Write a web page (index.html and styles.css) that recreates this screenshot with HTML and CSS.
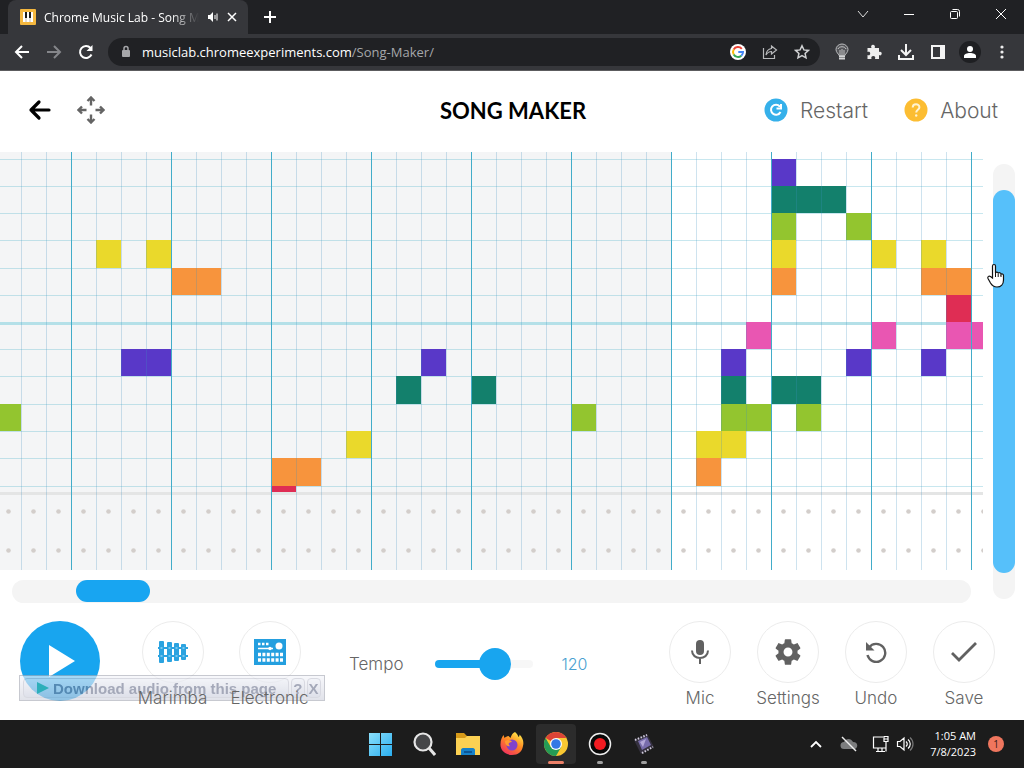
FILE: index.html
```html
<!DOCTYPE html>
<html lang="en">
<head>
<meta charset="utf-8">
<meta name="viewport" content="width=device-width, initial-scale=1">
<title>Chrome Music Lab - Song Maker</title>
<link rel="stylesheet" href="styles.css">
</head>
<body>
<header class="browser">
  <div class="tabstrip">
    <div class="tab">
      <svg class="favicon" width="16" height="16" viewBox="0 0 16 16"><rect width="16" height="16" rx="1" fill="#f4b73f"/><path d="M3 3h10v10H3z" fill="#fff"/><path d="M5 3h2v6H5zM9 3h2v6H9z" fill="#1b1b1b"/><path d="M6 9v4M10 9v4" stroke="#9b8f7d" stroke-width=".6"/></svg>
      <span class="tab-title">Chrome Music Lab - Song Maker</span>
      <svg width="12" height="12" viewBox="0 0 12 12"><path d="M1 4h2l3-3v10L3 8H1z" fill="#fff"/><path d="M8 4v4M10 2.500v7" stroke="#fff"/></svg>
      <button class="bare" aria-label="Close tab"><svg width="10" height="10" viewBox="0 0 10 10"><path d="M1 1l8 8M9 1L1 9" stroke="#fff" stroke-width="1.500"/></svg></button>
    </div>
    <button class="bare new-tab" aria-label="New tab"><svg width="14" height="14" viewBox="0 0 14 14"><path d="M7 1v12M1 7h12" stroke="#fff" stroke-width="2"/></svg></button>
    <div class="window-buttons">
      <button class="bare" aria-label="Search tabs"><svg width="12" height="12" viewBox="0 0 12 12"><path d="M1 3l5 6 5-6" fill="none" stroke="#ddd"/></svg></button>
      <button class="bare" aria-label="Minimize"><svg width="12" height="12" viewBox="0 0 12 12"><path d="M1 6.500h10" stroke="#fff"/></svg></button>
      <button class="bare" aria-label="Restore"><svg width="12" height="12" viewBox="0 0 12 12"><rect x="1.500" y="3.500" width="7" height="7" rx="1" fill="none" stroke="#fff"/><path d="M3.500 1.500h5a2 2 0 0 1 2 2v5" fill="none" stroke="#fff"/></svg></button>
      <button class="bare" aria-label="Close"><svg width="12" height="12" viewBox="0 0 12 12"><path d="M1 1l10 10M11 1L1 11" stroke="#fff"/></svg></button>
    </div>
  </div>
  <div class="toolbar">
    <div class="nav-buttons">
      <button class="bare" aria-label="Back"><svg width="16" height="16" viewBox="0 0 16 16"><path d="M15 8H2M8 2L2 8l6 6" fill="none" stroke="#fff" stroke-width="2"/></svg></button>
      <button class="bare" aria-label="Forward"><svg width="16" height="16" viewBox="0 0 16 16"><path d="M1 8h13M8 2l6 6-6 6" fill="none" stroke="#85868a" stroke-width="2"/></svg></button>
      <button class="bare" aria-label="Reload"><svg width="16" height="16" viewBox="0 0 16 16"><path d="M13.500 10.500A6 6 0 1 1 12.500 4" fill="none" stroke="#fff" stroke-width="2"/><path d="M14.500 1v6h-6z" fill="#fff"/></svg></button>
    </div>
    <div class="omnibox">
      <svg width="10" height="14" viewBox="0 0 10 14"><rect x="1" y="5" width="8" height="7" rx="1" fill="#a6a7aa"/><path d="M3 6V3.500a2 2 0 0 1 4 0V6" fill="none" stroke="#a6a7aa" stroke-width="1.500"/></svg>
      <span class="url">musiclab.chromeexperiments.com<span class="url-path">/Song-Maker/</span></span>
      <button class="bare" aria-label="Google"><svg width="16" height="16" viewBox="0 0 16 16"><circle cx="8" cy="8" r="8" fill="#fff"/><g fill="none" stroke-width="2"><path d="M11.800 4.800A5 5 0 0 0 3.700 5.500" stroke="#ea4335"/><path d="M3.700 5.500a5 5 0 0 0 0 5" stroke="#fbbc05"/><path d="M3.700 10.500a5 5 0 0 0 7.600 1.200" stroke="#34a853"/><path d="M11.300 11.700A5 5 0 0 0 13 8H8.300" stroke="#4285f4"/></g></svg></button>
      <button class="bare" aria-label="Share"><svg width="16" height="16" viewBox="0 0 16 16"><path d="M1.500 4v10.500h11V11M9.500 2l5 4-5 4V7.500C7 7.500 5.500 8.500 4 11c.3-3.500 2.200-6 5.500-6.500z" fill="none" stroke="#b8b9bb" stroke-width="1.200"/></svg></button>
      <button class="bare" aria-label="Bookmark"><svg width="16" height="16" viewBox="0 0 16 16"><path d="M8 1.800l1.900 4.100 4.500.5-3.300 3 .9 4.400L8 11.600l-4 2.200.9-4.400-3.300-3 4.500-.5z" fill="none" stroke="#d0d1d3" stroke-width="1.500"/></svg></button>
    </div>
    <div class="extensions">
      <button class="bare" aria-label="Bulb extension"><svg width="16" height="18" viewBox="0 0 16 18"><path d="M5 12.500C4.500 10.500 2 9.500 2 6.500a6 5.500 0 0 1 12 0c0 3-2.500 4-3 6z" fill="#55565a" stroke="#bbbcbe"/><path d="M6 12V7M8 12V6M10 12V7M4 6c1-3 7-3 8 0" fill="none" stroke="#ddd" stroke-width=".8"/><path d="M5 13h6v3.500H5z" fill="#d4d5d6"/><path d="M5 14.500h6" stroke="#77787b" stroke-width=".7"/></svg></button>
      <button class="bare" aria-label="Extensions"><svg width="16" height="16" viewBox="0 0 16 16"><path d="M1.500 4h4C4.500 2 5.500.700 7 .700S9.500 2 8.700 4H13v4c1.500-.8 2.700 0 2.700 1.500S14.500 12 13 11v4H9c.7-1.800-.1-3-1.700-3s-2.400 1.200-1.800 3h-4v-4c1.800.6 2.700-.3 2.700-1.600S3.200 7.300 1.500 8z" fill="#eee"/></svg></button>
      <button class="bare" aria-label="Downloads"><svg width="18" height="18" viewBox="0 0 18 18"><path d="M9 1v10M4 7l5 5 5-5M2 12v4h14v-4" fill="none" stroke="#f4f4f4" stroke-width="2"/></svg></button>
      <button class="bare" aria-label="Side panel"><svg width="16" height="16" viewBox="0 0 16 16"><path d="M2 2h12v12H2z" fill="none" stroke="#f4f4f4" stroke-width="2"/><path d="M10 2h4v12h-4z" fill="#f4f4f4"/></svg></button>
      <button class="bare" aria-label="Profile"><svg width="22" height="22" viewBox="0 0 22 22"><circle cx="11" cy="11" r="11" fill="#1e1f22"/><circle cx="11" cy="8" r="3" fill="#fff"/><path d="M5 17v-2c0-4 12-4 12 0v2z" fill="#fff"/></svg></button>
      <button class="bare" aria-label="Menu"><svg width="4" height="16" viewBox="0 0 4 16" fill="#eee"><circle cx="2" cy="3" r="1.600"/><circle cx="2" cy="8" r="1.600"/><circle cx="2" cy="13" r="1.600"/></svg></button>
    </div>
  </div>
</header>

<main class="app">
  <div class="app-header">
    <div class="header-left">
      <button class="bare" aria-label="Back"><svg width="24" height="22" viewBox="0 0 24 22"><path d="M21 11H3M11 3l-8 8 8 8" fill="none" stroke="#000" stroke-width="3.200" stroke-linecap="round" stroke-linejoin="round"/></svg></button>
      <button class="bare" aria-label="Move"><svg width="28" height="28" viewBox="0 0 28 28" fill="none" stroke="#646464" stroke-width="2.400"><path d="M14 9.500V2M10.500 5L14 1.500 17.500 5M14 18.500V26M10.500 23l3.500 3.500 3.500-3.500M9.500 14H2M5 10.500L1.500 14 5 17.500M18.500 14H26M23 10.500l3.500 3.500-3.500 3.500"/></svg></button>
    </div>
    <h1 class="title">SONG MAKER</h1>
    <div class="header-right">
      <button class="bare header-link"><svg width="24" height="24" viewBox="0 0 24 24"><circle cx="12" cy="12" r="11.500" fill="#35b0ea"/><path d="M16.500 14a5 5 0 1 1-.7-5.500M17 6v4.500h-4.500" fill="none" stroke="#fff" stroke-width="2"/></svg>Restart</button>
      <button class="bare header-link"><svg width="24" height="24" viewBox="0 0 24 24"><circle cx="12" cy="12" r="11.500" fill="#fcbd32"/><path d="M8.700 9.500c0-4.400 6.700-4.300 6.700-.3 0 2.500-3.200 2.600-3.200 5.300" fill="none" stroke="#fff3d2" stroke-width="2"/><circle cx="12.200" cy="17.500" r="1.200" fill="#fff3d2"/></svg>About</button>
    </div>
  </div>

  <div class="workspace">
    <div class="roll">
      <div class="grid">
        <svg class="notes" width="1920" height="418" role="img" aria-label="Melody and percussion grid">
          <defs>
            <pattern id="dots" x="-4" y="340" width="25" height="39" patternUnits="userSpaceOnUse"><circle cx="12.500" cy="19.500" r="2.300" fill="#d3cecb"/></pattern>
          </defs>
          <path d="M0 0h671v418H0z" fill="#f4f5f6"/>
          <g id="rowLines" fill="#3aa9c5" fill-opacity=".28"></g>
          <path d="M0 170h1920v3H0z" fill="#b4e0e8"/>
          <g id="noteLayer"></g>
          <path d="M0 340h1920v3H0z" fill="#e4e5e5"/>
          <rect y="340" width="1920" height="78" fill="url(#dots)"/>
          <g id="columnLines"></g>
        </svg>
      </div>
      <div class="h-scroll" role="scrollbar" aria-label="Time" aria-orientation="horizontal" aria-controls="noteLayer" aria-valuenow="7"><div class="h-thumb"></div></div>
    </div>
    <div class="v-scroll" role="scrollbar" aria-label="Pitch" aria-orientation="vertical" aria-controls="noteLayer" aria-valuenow="50"><div class="v-thumb"></div>
      <svg class="cursor" width="20" height="26" viewBox="0 0 20 26"><path d="M6.500 15V3c0-2 3-2 3 0v7c.5-1.500 2.700-1 2.700.5.700-1.500 2.800-.8 2.800.8.800-1 2.500-.3 2.500 1.200V17c0 4-2.500 7-6.500 7-3.500 0-5-1.500-6.500-4L2 15.500c-.8-2 1-3 2.500-2z" fill="#fff" stroke="#111" stroke-width="1.200"/><path d="M9.500 10v4M12.200 11v3M15 12v2" stroke="#111"/></svg>
    </div>
  </div>

  <div class="controls">
    <button class="play" aria-label="Play"><svg width="28" height="34" viewBox="0 0 28 34"><path d="M1 1l26 16L1 33z" fill="#fff"/></svg></button>
    <div class="instruments">
      <button class="tool"><span class="disc"><svg width="32" height="24" viewBox="0 0 32 24" fill="#2ba3e0"><path d="M1 7h30v2H1zM1 15h30v2H1z"/><rect x="2" y="1" width="5" height="22" rx="1"/><rect x="10" y="2" width="5" height="20" rx="1"/><rect x="17" y="3" width="5" height="18" rx="1"/><rect x="24" y="4" width="5" height="16" rx="1"/><path d="M3.500 7h2v2h-2zM3.500 15h2v2h-2zM11.500 7h2v2h-2zM11.500 15h2v2h-2zM18.500 7h2v2h-2zM18.500 15h2v2h-2zM25.500 7h2v2h-2zM25.500 15h2v2h-2z" fill="#7ac7ee"/></svg></span><span class="tool-label">Marimba</span></button>
      <button class="tool"><span class="disc"><svg width="32" height="26" viewBox="0 0 32 26"><path d="M0 0h32v26H0z" fill="#249fdf"/><circle cx="25" cy="7" r="3.500" fill="#fff"/><g stroke="#fff" fill="none"><path d="M4 5h11" stroke-width="2.500" stroke-dasharray="2.500 1.500"/><path d="M4 9.500h15" stroke-width="1.500"/><path d="M4 15.500h25M4 21h25" stroke-width="3.500" stroke-dasharray="3 1.400"/></g><circle cx="16" cy="9.500" r="1.700" fill="#fff"/></svg></span><span class="tool-label">Electronic</span></button>
    </div>
    <div class="tempo">
      <label for="tempo">Tempo</label>
      <input id="tempo" class="tempo-range" type="range" min="0" max="180" value="120">
      <output class="tempo-value" for="tempo">120</output>
    </div>
    <div class="actions">
      <button class="tool"><span class="disc"><svg width="20" height="26" viewBox="0 0 20 26"><rect x="6" y="1" width="8" height="15" rx="4" fill="#616161"/><path d="M2 11.500c0 10 16 10 16 0M10 19v6" fill="none" stroke="#616161" stroke-width="2"/></svg></span><span class="tool-label">Mic</span></button>
      <button class="tool"><span class="disc"><svg width="28" height="28" viewBox="1 1 22 22"><path fill="#616161" d="M19.430 12.980c.04-.32.07-.64.07-.98s-.03-.66-.07-.98l2.110-1.650c.19-.15.24-.42.12-.64l-2-3.460c-.12-.22-.39-.3-.61-.22l-2.490 1c-.52-.4-1.080-.73-1.690-.98l-.38-2.650A.488.488 0 0 0 14 2h-4c-.25 0-.46.18-.49.42l-.38 2.650c-.61.25-1.170.59-1.690.98l-2.490-1c-.23-.09-.49 0-.61.22l-2 3.460c-.13.22-.07.49.12.640l2.110 1.650c-.04.32-.07.65-.07.980s.03.66.07.980l-2.110 1.650c-.19.150-.24.420-.12.640l2 3.460c.12.220.39.300.61.220l2.490-1c.52.400 1.080.730 1.690.980l.38 2.650c.03.240.24.420.49.420h4c.25 0 .46-.18.490-.42l.38-2.650c.61-.25 1.170-.59 1.690-.98l2.490 1c.23.090.49 0 .61-.22l2-3.460c.12-.22.07-.49-.12-.64zM12 15.500a3.500 3.500 0 1 1 0-7 3.500 3.500 0 0 1 0 7z"/></svg></span><span class="tool-label">Settings</span></button>
      <button class="tool"><span class="disc"><svg width="24" height="24" viewBox="0 0 24 24"><path d="M5 7.500A9 9 0 1 1 3.500 15" fill="none" stroke="#616161" stroke-width="2.400"/><path d="M2 2v8.500h8.500z" fill="#616161"/></svg></span><span class="tool-label">Undo</span></button>
      <button class="tool"><span class="disc"><svg width="28" height="22" viewBox="0 0 28 22"><path d="M2 12l7 7L26 2" fill="none" stroke="#616161" stroke-width="2.800"/></svg></span><span class="tool-label">Save</span></button>
    </div>
    <div class="download-bar">
      <button class="download-main"><svg width="14" height="12" viewBox="0 0 14 12"><path d="M1 0l12 6-12 6z" fill="#39b59f"/></svg>Download audio from this page</button>
      <button class="download-key" aria-label="Help">?</button>
      <button class="download-key" aria-label="Close">X</button>
    </div>
  </div>
</main>

<footer class="taskbar">
  <div class="pinned">
    <button class="bare task" aria-label="Start"><svg width="24" height="24" viewBox="0 0 24 24"><defs><linearGradient id="win" x2="1" y2="1"><stop stop-color="#8be0fc"/><stop offset="1" stop-color="#2aaef0"/></linearGradient></defs><path d="M1 1h11v11H1zM13 1h11v11H13zM1 13h11v11H1zM13 13h11v11H13z" fill="url(#win)"/></svg></button>
    <button class="bare task" aria-label="Search"><svg width="24" height="24" viewBox="0 0 24 24"><circle cx="11" cy="10" r="8.500" fill="#454648" stroke="#e6e6e6" stroke-width="2.200"/><path d="M17 16l6 7" stroke="#e6e6e6" stroke-width="3"/></svg></button>
    <button class="bare task" aria-label="File Explorer"><svg width="26" height="24" viewBox="0 0 26 24"><path d="M1 1h8l3 3h13v5H1z" fill="#d79a19"/><path d="M1 6h9l2-2h13v19H1z" fill="#fcd153"/><path d="M6 23v-5c0-1 1-2 2-2h10c1 0 2 1 2 2v5z" fill="#1681c9"/><path d="M9 20h8" stroke="#0c5595" stroke-width="2"/></svg></button>
    <button class="bare task" aria-label="Firefox"><svg width="26" height="26" viewBox="0 0 26 26"><defs><linearGradient id="fox" x1=".8" x2=".2" y2="1"><stop stop-color="#fff04d"/><stop offset=".45" stop-color="#ff8a22"/><stop offset="1" stop-color="#ef2a62"/></linearGradient></defs><path d="M16 1c2 2 3 3 3.500 5 1-.5 1-1.500 1-2.500C24 7 25 11 24 15c-1 6-5 9-11 9C6 24 1 19 1.500 13 1.500 9 3 6 4.500 4l1 3c1-1 2.500-2 4-2l2 2c1-3 2-5 4.500-6z" fill="url(#fox)"/><circle cx="13" cy="14" r="5.500" fill="#8142cb"/><path d="M6 10c3-2 6-1 7 1-4 0-4 3-2 4-3 1-5-2-5-5z" fill="#ff9a2f"/></svg></button>
    <button class="bare task task-active" aria-label="Chrome"><svg width="26" height="26" viewBox="0 0 26 26"><circle cx="13" cy="13" r="12" fill="#fac832"/><path d="M13 13L2.600 7A12 12 0 0 1 23.400 7H13z" fill="#dc4437"/><path d="M2.600 7A12 12 0 0 0 13 25l5.200-9H7.800z" fill="#259b55"/><circle cx="13" cy="13" r="6" fill="#fff"/><circle cx="13" cy="13" r="4.800" fill="#3478e5"/></svg></button>
    <button class="bare task task-running" aria-label="Recorder"><svg width="24" height="24" viewBox="0 0 24 24"><circle cx="12" cy="12" r="10.500" fill="#080808" stroke="#eee" stroke-width="1.500"/><circle cx="12" cy="12" r="6" fill="#f21b21"/></svg></button>
    <button class="bare task task-running" aria-label="Video editor"><svg width="24" height="24" viewBox="0 0 24 24"><path d="M2 8l13-6 7 13-13 7z" fill="#35313f"/><path d="M3 8l12-5M10 21l11-6" stroke="#d2cddd" stroke-width="2" stroke-dasharray="1.500 1.500"/><path d="M6 9l9-4 4 8-9 5z" fill="#776cab"/><path d="M8 10l6-3-3 8z" fill="#b3a8d8"/></svg></button>
  </div>
  <div class="tray">
    <button class="bare" aria-label="Show hidden icons"><svg width="12" height="8" viewBox="0 0 12 8"><path d="M1 7l5-5 5 5" fill="none" stroke="#fff" stroke-width="1.800"/></svg></button>
    <svg class="cloud" width="18" height="16" viewBox="0 0 18 16"><path d="M4 13a3.500 3.500 0 0 1 0-7c2-4 7-4 9 0 6 0 5 7 1 7z" fill="#7c7d7e"/><path d="M2 1l14 14" stroke="#eee" stroke-width="1.400"/></svg>
    <svg width="18" height="18" viewBox="0 0 18 18" fill="none" stroke="#fff" stroke-width="1.200"><path d="M11 2H1.500v11H14V8M4 16.500h9M6 13v3M10 13v3M12 1.500h4v5h-4zM14 6.500v10M12 4h4"/></svg>
    <svg width="18" height="16" viewBox="0 0 18 16" fill="none" stroke="#fff" stroke-width="1.200"><path d="M1.500 5.500H4L8 2v12l-4-3.500H1.500zM10 5.500c1.500 1.500 1.500 3.500 0 5M12 3.500c3 2.500 3 6.500 0 9"/><path d="M14 1.500c4 3.500 4 9.500 0 13" stroke="#777"/></svg>
    <time class="clock" datetime="2023-07-08T01:05">1:05 AM<br>7/8/2023</time>
    <span class="badge">1</span>
  </div>
</footer>
<script src="grid.js"></script>
</body>
</html>
```

FILE: styles.css
```css
* { box-sizing: border-box; }
body {
  margin: 0;
  display: flex;
  flex-direction: column;
  min-height: 100vh;
  background: #fff;
  font-family: "Open Sans", "Noto Sans", sans-serif;
}
svg { display: block; flex: none; }
button { font: inherit; color: inherit; cursor: pointer; }
.bare {
  display: flex;
  align-items: center;
  justify-content: center;
  padding: 0;
  border: 0;
  background: none;
}

/* Browser chrome */
.browser { flex: none; background: #36373b; border-bottom: 1px solid #5c5c5e; color: #fff; }
.tabstrip { display: flex; height: 34px; background: #202124; padding-left: 8px; }
.tab {
  display: flex;
  align-items: center;
  gap: 8px;
  width: 240px;
  padding: 0 11px 0 12px;
  background: #36373b;
  border-radius: 8px 8px 0 0;
  font-size: 12px;
}
.tab-title {
  flex: 1;
  overflow: hidden;
  white-space: nowrap;
  mask-image: linear-gradient(to right, #000 82%, transparent);
}
.new-tab { width: 44px; }
.window-buttons { display: flex; margin-left: auto; height: 28px; }
.window-buttons .bare { width: 46px; }
.toolbar { display: flex; align-items: center; gap: 6px; height: 36px; padding: 0 6px 0 14px; }
.nav-buttons { display: flex; gap: 16px; padding-right: 8px; }
.omnibox {
  display: flex;
  flex: 1;
  align-items: center;
  gap: 16px;
  height: 28px;
  padding: 0 10px 0 13px;
  border-radius: 14px;
  background: #202124;
  font-size: 13px;
}
.omnibox > svg { margin-right: -5px; }
.url { flex: 1; white-space: nowrap; overflow: hidden; }
.url-path { color: #a5a7aa; }
.extensions { display: flex; align-items: center; }
.extensions .bare { width: 32px; }

/* Song maker */
.app { flex: 1; display: flex; flex-direction: column; font-family: Inter, "Open Sans", sans-serif; color: #666; }
.app-header {
  display: grid;
  grid-template-columns: 1fr auto 1fr;
  align-items: center;
  height: 81px;
  padding: 0 26px 3px 28px;
}
.header-left { display: flex; align-items: center; gap: 25px; }
.title { margin: 0; color: #000; font-family: Lato, sans-serif; font-size: 22px; font-weight: 700; }
.header-right { display: flex; justify-content: flex-end; gap: 36px; font-size: 21px; font-weight: 300; }
.header-link { gap: 12px; }

.workspace { display: flex; }
.roll { flex: 1; min-width: 0; }
.grid { height: 418px; overflow: hidden; }
.h-scroll { height: 23px; margin: 10px 12px 0; border-radius: 12px; background: #f4f4f4; }
.h-scroll { display: flex; }
.h-thumb { width: 7.7%; height: 22px; margin-left: 6.7%; border-radius: 11px; background: #18a5f1; }
.v-scroll { position: relative; width: 22px; margin: 12px 9px 4px 10px; padding: 26px 0; border-radius: 11px; background: #f4f4f4; }
.v-thumb { height: 100%; border-radius: 11px; background: #56c0fa; }
.cursor { position: absolute; left: -7px; top: 99px; }

.controls {
  position: relative;
  display: flex;
  align-items: flex-start;
  padding: 18px 16px 10px 20px;
  font-size: 17px;
  font-weight: 300;
}
.play {
  display: flex;
  align-items: center;
  justify-content: center;
  width: 80px;
  height: 80px;
  padding: 0 0 0 3px;
  border: 0;
  border-radius: 50%;
  background: #18a5ef;
}
.instruments { display: flex; margin-left: 24px; }
.tool {
  display: flex;
  flex-direction: column;
  align-items: center;
  gap: 4px;
  width: 97px;
  padding: 0;
  border: 0;
  background: none;
  line-height: 22px;
}
.tool-label { position: relative; z-index: 2; }
.disc {
  display: flex;
  align-items: center;
  justify-content: center;
  width: 62px;
  height: 62px;
  border: 1px solid #ececec;
  border-radius: 50%;
}
.tempo { display: flex; align-items: center; height: 86px; margin-left: 31px; }
.tempo-range { appearance: none; width: 98px; height: 32px; margin: 0 28px 0 32px; background: none; }
.tempo-range::-webkit-slider-runnable-track {
  height: 8px;
  border-radius: 4px;
  background: linear-gradient(to right, #18a5ef 60%, #f7f7f7 60%);
}
.tempo-range::-webkit-slider-thumb {
  appearance: none;
  width: 32px;
  height: 32px;
  margin-top: -12px;
  border-radius: 50%;
  background: #18a5ef;
}
.tempo-value { color: #4a9fd1; font-size: 16px; }
.actions { display: flex; margin-left: auto; }
.actions .tool { width: 88px; }

.download-bar {
  position: absolute;
  z-index: 1;
  left: 19px;
  top: 72px;
  display: flex;
  align-items: center;
  gap: 2px;
  height: 26px;
  padding: 2px 3px;
  border: 1px solid #aaadb8;
  background: linear-gradient(#f4f5fa, #d2d4df);
  color: #747b94;
  font: 700 15px "Liberation Sans", sans-serif;
  opacity: .65;
}
.download-main, .download-key {
  display: flex;
  align-items: center;
  gap: 3px;
  height: 20px;
  padding: 0 12px;
  border: 1px solid #c4c6d2;
  border-radius: 4px;
  background: linear-gradient(#eceef5, #ced1df);
  white-space: nowrap;
}
.download-key { padding: 0 1px; }

/* Taskbar */
.taskbar {
  flex: none;
  display: grid;
  grid-template-columns: 1fr auto 1fr;
  align-items: center;
  height: 48px;
  background: #1c1c1c;
  color: #fff;
}
.pinned { grid-column: 2; display: flex; gap: 4px; }
.task { position: relative; width: 40px; height: 40px; border-radius: 4px; }
.task-active { background: #2c2c2c; }
.task-active::after, .task-running::after {
  content: "";
  position: absolute;
  bottom: 0;
  left: 50%;
  translate: -50% 0;
  width: 6px;
  height: 3px;
  border-radius: 2px;
  background: #a0a0a0;
}
.task-active::after { width: 16px; background: #ec8068; }
.tray { display: flex; align-items: center; justify-content: flex-end; gap: 6px; padding-right: 20px; }
.tray .bare { margin-right: 12px; }
.cloud { margin-right: 8px; }
.clock { margin: 0 6px 0 10px; text-align: right; font-size: 11px; line-height: 16px; }
.badge { width: 16px; height: 16px; border-radius: 50%; background: #ef765e; color: #371b17; font-size: 10px; line-height: 16px; text-align: center; }
```

FILE: grid.js
```js
const svgNs = "http://www.w3.org/2000/svg";
const stepWidth = 25;
const colors = {
  pink: "#e956b2", red: "#df2d54", orange: "#f7943d", yellow: "#ead92b",
  lime: "#93c52f", teal: "#13806c", violet: "#5938c8"
};
// Top edge of every row; row 6 starts the lower octave.
const rowTops = [7, 34, 61, 88, 116, 143, 170, 197, 224, 252, 279, 306, 334];
// [row, first step, number of steps, color]
const notes = [
  [3, 4, 1, "yellow"], [3, 6, 1, "yellow"], [4, 7, 2, "orange"],
  [7, 5, 2, "violet"], [9, 0, 1, "lime"],
  [11, 11, 2, "orange"], [12, 11, 1, "red"], [10, 14, 1, "yellow"],
  [8, 16, 1, "teal"], [7, 17, 1, "violet"], [8, 19, 1, "teal"], [9, 23, 1, "lime"],
  [0, 31, 1, "violet"], [1, 31, 3, "teal"], [2, 31, 1, "lime"], [3, 31, 1, "yellow"], [4, 31, 1, "orange"],
  [2, 34, 1, "lime"], [3, 35, 1, "yellow"], [3, 37, 1, "yellow"], [4, 37, 2, "orange"],
  [5, 38, 1, "red"], [6, 30, 1, "pink"], [6, 35, 1, "pink"], [6, 38, 2, "pink"],
  [7, 29, 1, "violet"], [7, 34, 1, "violet"], [7, 37, 1, "violet"],
  [8, 29, 1, "teal"], [8, 31, 2, "teal"], [9, 29, 2, "lime"], [9, 32, 1, "lime"],
  [10, 28, 2, "yellow"], [11, 28, 1, "orange"]
];

function addRect(parent, attrs) {
  const el = document.createElementNS(svgNs, "rect");
  for (const key in attrs) el.setAttribute(key, attrs[key]);
  parent.appendChild(el);
}

const noteLayer = document.getElementById("noteLayer");
for (const [row, step, count, color] of notes) {
  const bottom = rowTops[row + 1] || 340;
  addRect(noteLayer, {
    x: step * stepWidth - 4, y: rowTops[row],
    width: count * stepWidth, height: bottom - rowTops[row], fill: colors[color]
  });
}

const rowLines = document.getElementById("rowLines");
for (const top of rowTops) addRect(rowLines, { x: 0, y: top, width: 1920, height: 1 });

// Every fourth line marks a beat.
const columnLines = document.getElementById("columnLines");
for (let step = 1; step < 77; step++) {
  const beat = step % 4 === 3;
  addRect(columnLines, {
    x: step * stepWidth - 4, y: 0, width: 1, height: 418,
    fill: beat ? "#42acc9" : "#3b8fc0", "fill-opacity": beat ? 1 : 0.25
  });
}
```
